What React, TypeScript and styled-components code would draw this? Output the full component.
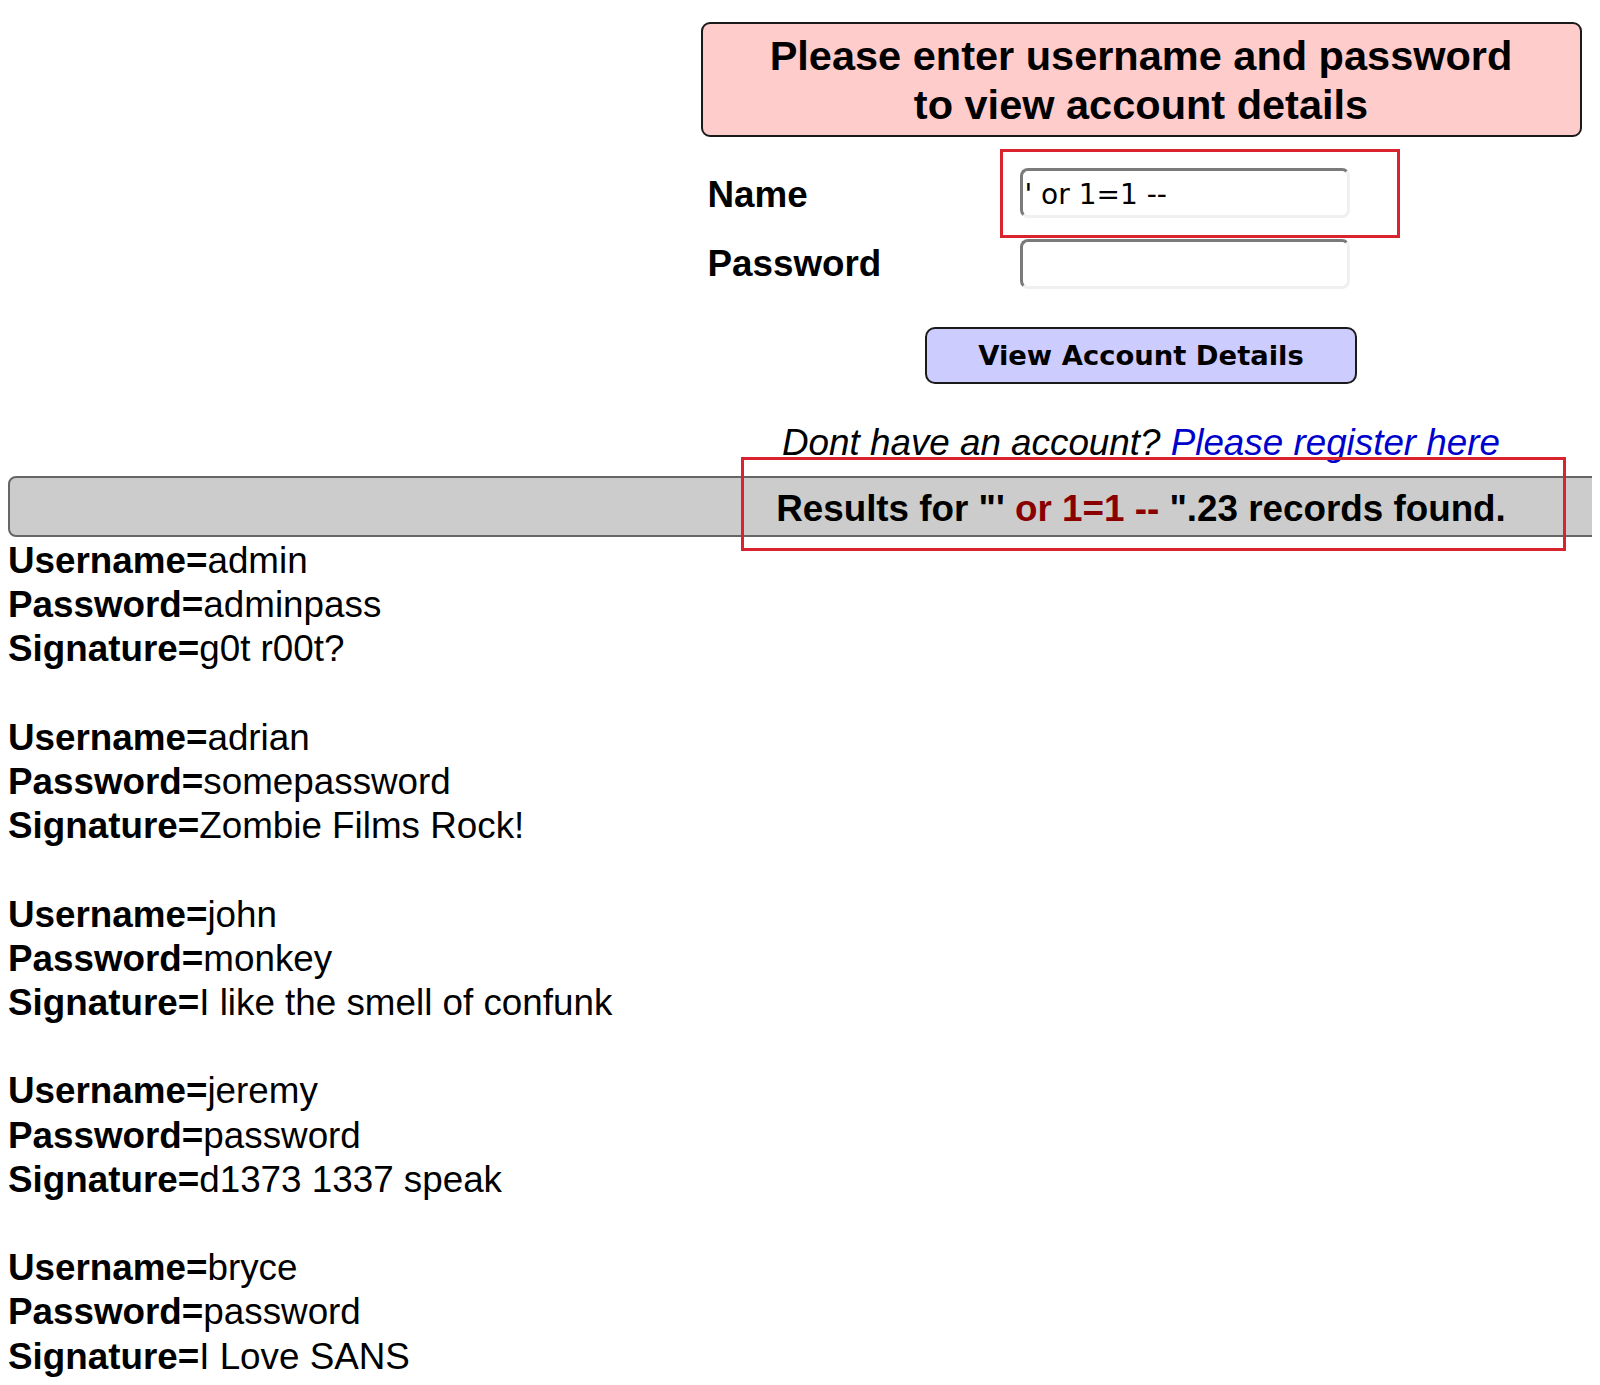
import styled, { createGlobalStyle } from 'styled-components';

const GlobalStyle = createGlobalStyle`
  html, body {
    overflow: hidden;
  }
  body {
    margin: 8px;
    background: #ffffff;
    color: #000000;
    font-family: 'Liberation Sans', Arial, sans-serif;
  }
`;

interface IAccount {
  username: string;
  password: string;
  signature: string;
}

const accounts: IAccount[] = [
  { username: 'admin', password: 'adminpass', signature: 'g0t r00t?' },
  { username: 'adrian', password: 'somepassword', signature: 'Zombie Films Rock!' },
  { username: 'john', password: 'monkey', signature: 'I like the smell of confunk' },
  { username: 'jeremy', password: 'password', signature: 'd1373 1337 speak' },
  { username: 'bryce', password: 'password', signature: 'I Love SANS' },
];

function App() {
  return (
    <>
      <GlobalStyle />
      <Page>
        <FormColumn>
          <Banner>
            Please enter username and password
            <br />
            to view account details
          </Banner>
          <FormGrid>
            <Label $shift={3}>Name</Label>
            <Field>
              <TextInput type="text" defaultValue="' or 1=1 --" />
              <Highlight $left={-20} $top={-19} $width={400} $height={89} />
            </Field>
            <Label $shift={0}>Password</Label>
            <Field>
              <TextInput type="password" />
            </Field>
          </FormGrid>
          <SubmitRow>
            <SubmitButton type="button">View Account Details</SubmitButton>
          </SubmitRow>
          <RegisterNote>
            Dont have an account? <RegisterLink href="#">Please register here</RegisterLink>
          </RegisterNote>
        </FormColumn>
        <ResultsBar>
          Results for "'<Injected> or 1=1 -- </Injected>".23 records found.
          <Highlight $left={731} $top={-21} $width={825} $height={94} />
        </ResultsBar>
        <RecordList>
          {accounts.map((account) => (
            <Record key={account.username}>
              <Line>
                <Key>Username=</Key>
                {account.username}
              </Line>
              <Line>
                <Key>Password=</Key>
                {account.password}
              </Line>
              <Line>
                <Key>Signature=</Key>
                {account.signature}
              </Line>
            </Record>
          ))}
        </RecordList>
      </Page>
    </>
  );
}

const Page = styled.div`
  width: 2266px;
`;

const FormColumn = styled.div`
  width: 881px;
  margin: 0 auto;
  padding-top: 14px;
`;

const Banner = styled.div`
  background-color: #ffcccc;
  border: 2px solid #1a1a1a;
  border-radius: 9px;
  padding: 7px 0 6px;
  font-size: 41.5px;
  line-height: 49px;
  font-weight: bold;
  text-align: center;
`;

const FormGrid = styled.div`
  display: grid;
  grid-template-columns: 319px 1fr;
  row-gap: 21px;
  align-items: center;
  margin-top: 31px;
`;

const Label = styled.div<{ $shift: number }>`
  padding: ${(props) => props.$shift}px 0 0 7px;
  font-size: 36.8px;
  font-weight: bold;
`;

const Field = styled.div`
  position: relative;
  width: 330px;
  height: 50px;
`;

const TextInput = styled.input`
  box-sizing: border-box;
  width: 330px;
  height: 50px;
  padding: 2px 2px 0;
  border: 3px solid;
  border-color: #7a7a7a #f0f0f0 #f0f0f0 #7a7a7a;
  border-radius: 8px;
  background: #ffffff;
  font-family: 'DejaVu Sans', Verdana, sans-serif;
  font-size: 28px;
  color: #000000;
  outline: none;
`;

const Highlight = styled.span<{ $left: number; $top: number; $width: number; $height: number }>`
  position: absolute;
  left: ${(props) => props.$left}px;
  top: ${(props) => props.$top}px;
  width: ${(props) => props.$width}px;
  height: ${(props) => props.$height}px;
  box-sizing: border-box;
  border: 3px solid #d9232e;
  pointer-events: none;
`;

const SubmitRow = styled.div`
  display: flex;
  justify-content: center;
  margin-top: 38px;
`;

const SubmitButton = styled.button`
  box-sizing: border-box;
  width: 432px;
  height: 57px;
  background-color: #ccccff;
  border: 2px solid #1a1a1a;
  border-radius: 10px;
  font-family: 'DejaVu Sans', Verdana, sans-serif;
  font-size: 27.4px;
  font-weight: bold;
  color: #000000;
  cursor: pointer;
`;

const RegisterNote = styled.div`
  margin-top: 38px;
  font-size: 36.8px;
  font-style: italic;
  text-align: center;
`;

const RegisterLink = styled.a`
  color: #0000cc;
  text-decoration: underline;
`;

const ResultsBar = styled.div`
  position: relative;
  margin-top: 12px;
  height: 57px;
  line-height: 61px;
  background-color: #cccccc;
  border: 2px solid #666666;
  border-radius: 8px;
  font-size: 36.8px;
  font-weight: bold;
  text-align: center;
`;

const Injected = styled.span`
  color: #8a0000;
`;

const RecordList = styled.div`
  margin-top: 2px;
  font-size: 36.8px;
  line-height: 44.2px;
`;

const Record = styled.div`
  margin-bottom: 44.2px;
`;

const Line = styled.div``;

const Key = styled.b``;

export default App;
